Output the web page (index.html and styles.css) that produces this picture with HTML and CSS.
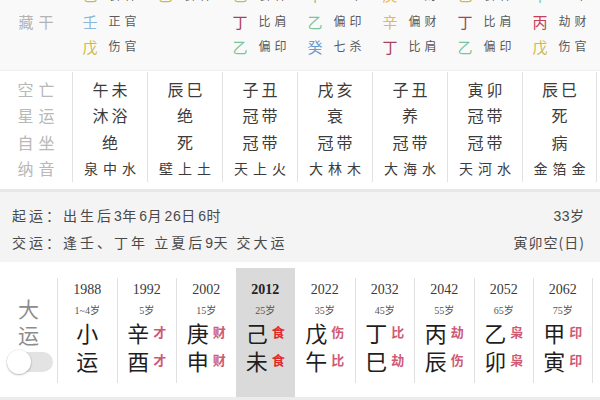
FILE: index.html
```html
<!DOCTYPE html>
<html lang="zh">
<head>
<meta charset="utf-8">
<link rel="stylesheet" href="styles.css">
</head>
<body>
<div class="page">
  <section class="cg">
    <div class="cg-row cut">
      <div class="cg-label"></div>
      <div class="cg-cell"><span class="st c-tu">己</span><span class="gd">食神</span></div>
      <div class="cg-cell"><span class="st c-tu">己</span><span class="gd">食神</span></div>
      <div class="cg-cell"><span class="st c-tu">己</span><span class="gd">食神</span></div>
      <div class="cg-cell"><span class="st c-mu">甲</span><span class="gd">正印</span></div>
      <div class="cg-cell"><span class="st c-jin">庚</span><span class="gd">正财</span></div>
      <div class="cg-cell"><span class="st c-tu">己</span><span class="gd">食神</span></div>
      <div class="cg-cell"><span class="st c-mu">甲</span><span class="gd">正印</span></div>
    </div>
    <div class="cg-row">
      <div class="cg-label">藏干</div>
      <div class="cg-cell"><span class="st c-ren">壬</span><span class="gd">正官</span></div>
      <div class="cg-cell"></div>
      <div class="cg-cell"><span class="st c-huo">丁</span><span class="gd">比肩</span></div>
      <div class="cg-cell"><span class="st c-mu">乙</span><span class="gd">偏印</span></div>
      <div class="cg-cell"><span class="st c-jin">辛</span><span class="gd">偏财</span></div>
      <div class="cg-cell"><span class="st c-huo">丁</span><span class="gd">比肩</span></div>
      <div class="cg-cell"><span class="st c-bing">丙</span><span class="gd">劫财</span></div>
    </div>
    <div class="cg-row">
      <div class="cg-label"></div>
      <div class="cg-cell"><span class="st c-tu">戊</span><span class="gd">伤官</span></div>
      <div class="cg-cell"></div>
      <div class="cg-cell"><span class="st c-mu">乙</span><span class="gd">偏印</span></div>
      <div class="cg-cell"><span class="st c-gui">癸</span><span class="gd">七杀</span></div>
      <div class="cg-cell"><span class="st c-huo">丁</span><span class="gd">比肩</span></div>
      <div class="cg-cell"><span class="st c-mu">乙</span><span class="gd">偏印</span></div>
      <div class="cg-cell"><span class="st c-tu">戊</span><span class="gd">伤官</span></div>
    </div>
  </section>

  <section class="tbl">
    <div class="tcol tlabel">
      <div class="tl">空亡</div><div class="tl">星运</div><div class="tl">自坐</div><div class="tl">纳音</div>
    </div>
    <div class="tcol">
      <div class="tl">午未</div><div class="tl">沐浴</div><div class="tl">绝</div><div class="tl ny">泉中水</div>
    </div>
    <div class="tcol">
      <div class="tl">辰巳</div><div class="tl">绝</div><div class="tl">死</div><div class="tl ny">壁上土</div>
    </div>
    <div class="tcol">
      <div class="tl">子丑</div><div class="tl">冠带</div><div class="tl">冠带</div><div class="tl ny">天上火</div>
    </div>
    <div class="tcol">
      <div class="tl">戌亥</div><div class="tl">衰</div><div class="tl">冠带</div><div class="tl ny">大林木</div>
    </div>
    <div class="tcol">
      <div class="tl">子丑</div><div class="tl">养</div><div class="tl">冠带</div><div class="tl ny">大海水</div>
    </div>
    <div class="tcol">
      <div class="tl">寅卯</div><div class="tl">冠带</div><div class="tl">冠带</div><div class="tl ny">天河水</div>
    </div>
    <div class="tcol">
      <div class="tl">辰巳</div><div class="tl">死</div><div class="tl">病</div><div class="tl ny">金箔金</div>
    </div>
  </section>

  <section class="info">
    <div class="info-row">
      <div class="info-l">起运：出生后<span class="num">3</span>年<span class="num">6</span>月<span class="num">26</span>日<span class="num">6</span>时</div>
      <div class="info-r"><span class="num">33</span>岁</div>
    </div>
    <div class="info-row">
      <div class="info-l">交运：逢壬、丁年 立夏后<span class="num">9</span>天 交大运</div>
      <div class="info-r">寅卯空(日)</div>
    </div>
  </section>

  <section class="dy">
    <div class="dy-label">
      <div class="dy-title">大</div>
      <div class="dy-title">运</div>
      <div class="toggle"><span class="knob"></span></div>
    </div>
    <div class="dcol">
      <div class="dinner">
        <div class="yr">1988</div>
        <div class="age">1~4岁</div>
        <div class="gz"><span class="zi">小</span></div>
        <div class="gz"><span class="zi">运</span></div>
      </div>
    </div>
    <div class="dcol">
      <div class="dinner">
        <div class="yr">1992</div>
        <div class="age">5岁</div>
        <div class="gz"><span class="zi">辛</span><span class="tag">才</span></div>
        <div class="gz"><span class="zi">酉</span><span class="tag">才</span></div>
      </div>
    </div>
    <div class="dcol">
      <div class="dinner">
        <div class="yr">2002</div>
        <div class="age">15岁</div>
        <div class="gz"><span class="zi">庚</span><span class="tag">财</span></div>
        <div class="gz"><span class="zi">申</span><span class="tag">财</span></div>
      </div>
    </div>
    <div class="dcol cur">
      <div class="dinner">
        <div class="yr">2012</div>
        <div class="age">25岁</div>
        <div class="gz"><span class="zi">己</span><span class="tag hot">食</span></div>
        <div class="gz"><span class="zi">未</span><span class="tag hot">食</span></div>
      </div>
    </div>
    <div class="dcol after">
      <div class="dinner">
        <div class="yr">2022</div>
        <div class="age">35岁</div>
        <div class="gz"><span class="zi">戊</span><span class="tag">伤</span></div>
        <div class="gz"><span class="zi">午</span><span class="tag">比</span></div>
      </div>
    </div>
    <div class="dcol">
      <div class="dinner">
        <div class="yr">2032</div>
        <div class="age">45岁</div>
        <div class="gz"><span class="zi">丁</span><span class="tag">比</span></div>
        <div class="gz"><span class="zi">巳</span><span class="tag">劫</span></div>
      </div>
    </div>
    <div class="dcol">
      <div class="dinner">
        <div class="yr">2042</div>
        <div class="age">55岁</div>
        <div class="gz"><span class="zi">丙</span><span class="tag">劫</span></div>
        <div class="gz"><span class="zi">辰</span><span class="tag">伤</span></div>
      </div>
    </div>
    <div class="dcol">
      <div class="dinner">
        <div class="yr">2052</div>
        <div class="age">65岁</div>
        <div class="gz"><span class="zi">乙</span><span class="tag">枭</span></div>
        <div class="gz"><span class="zi">卯</span><span class="tag">枭</span></div>
      </div>
    </div>
    <div class="dcol last">
      <div class="dinner">
        <div class="yr">2062</div>
        <div class="age">75岁</div>
        <div class="gz"><span class="zi">甲</span><span class="tag">印</span></div>
        <div class="gz"><span class="zi">寅</span><span class="tag">印</span></div>
      </div>
    </div>
  </section>
  <div class="band"></div>
</div>
</body>
</html>
```
FILE: styles.css
```css
* { box-sizing: border-box; }
html, body { margin: 0; padding: 0; }
body {
  width: 600px;
  height: 400px;
  overflow: hidden;
  background: #fff;
  font-family: "Noto Sans CJK SC", "Noto Sans", sans-serif;
  color: #333;
}
.page { width: 600px; }

/* 藏干 */
.cg {
  background: #f9f9f9;
  margin-top: -19.5px;
  padding-bottom: 11px;
  border-bottom: 1px solid #f0f0f0;
}
.cg-row {
  display: grid;
  grid-template-columns: 72px repeat(7, 75px);
  height: 25px;
}
.cg-row.cut { height: 28px; }
.cg-label {
  display: flex;
  align-items: center;
  justify-content: center;
  font-size: 15px;
  letter-spacing: 5px;
  color: #b4b4b4;
  padding-left: 5px;
}
.cg-cell {
  display: flex;
  align-items: center;
  justify-content: center;
  gap: 11px;
}
.st { font-size: 15px; line-height: 1; }
.gd { font-size: 12px; letter-spacing: 4px; color: #5a5a5a; margin-right: -4px; line-height: 1; }
.c-ren { color: #8ab7da; }
.c-gui { color: #6b9bd0; }
.c-tu { color: #cdb94a; }
.c-huo { color: #a8415c; }
.c-bing { color: #c7405a; }
.c-mu { color: #7cc49a; }
.c-jin { color: #ebb646; }

/* 空亡 table */
.tbl {
  display: flex;
  background: #fff;
  padding-top: 1px;
  padding-bottom: 7px;
}
.tcol {
  width: 75px;
  border-left: 1px solid #e2e2e2;
  padding: 4px 0 0;
  height: 110px;
  display: flex;
  flex-direction: column;
}
.tcol.tlabel { width: 72px; border-left: none; }
.tcol:last-child { border-right: 1px solid #e2e2e2; }
.tl {
  height: 26.5px;
  line-height: 26.5px;
  text-align: center;
  font-size: 16px;
  letter-spacing: 3px;
  padding-left: 3px;
  color: #3c3c3c;
}
.tlabel .tl { color: #b8b8b8; letter-spacing: 5px; padding-left: 5px; }
.tl.ny { font-size: 14px; letter-spacing: 5px; padding-left: 5px; }

/* info */
.info {
  background: #f4f4f4;
  border-top: 3px solid #e8e8e8;
  padding: 10px 15px 6px 12px;
  height: 73px;
}
.info-row {
  display: flex;
  justify-content: space-between;
  height: 27px;
  line-height: 27px;
  font-size: 14px;
  color: #4a4a4a;
}
.info-l { letter-spacing: 3px; }
.info-r { letter-spacing: 1px; }
.num {
  font-family: "Liberation Sans Narrow", "Liberation Sans", sans-serif;
  letter-spacing: 0.5px;
  font-size: 14px;
}

/* 大运 */
.dy {
  display: grid;
  grid-template-columns: 57px repeat(9, 59.5px);
  background: #fff;
  padding-top: 6px;
  height: 135px;
}
.dy-label {
  display: flex;
  flex-direction: column;
  align-items: center;
  padding-top: 27px;
}
.dy-title {
  font-size: 21px;
  line-height: 26px;
  height: 26px;
  overflow: visible;
  color: #8c8c8c;
}
.toggle {
  margin-top: 5px;
  margin-left: 4px;
  width: 45px;
  height: 20px;
  border-radius: 10px;
  background: #e3e3e3;
  position: relative;
}
.knob {
  position: absolute;
  left: -1px;
  top: -2px;
  width: 24px;
  height: 24px;
  border-radius: 50%;
  background: #fff;
  box-shadow: 0 1px 2px rgba(0,0,0,0.25), 0 0 0 1px rgba(0,0,0,0.04);
}
.dcol { padding-top: 10px; }
.dcol.cur { background: #dadada; }
.dinner {
  border-left: 1px solid #e0e0e0;
  height: 105px;
  padding-top: 3px;
  display: flex;
  flex-direction: column;
  align-items: center;
}
.dcol.cur .dinner, .dcol.after .dinner { border-left: none; }
.dcol.last .dinner { border-right: 1px solid #e0e0e0; }
.yr {
  font-family: "Liberation Serif", serif;
  font-size: 14px;
  line-height: 18px;
  color: #3a3a3a;
}
.cur .yr { font-weight: bold; color: #222; }
.age {
  margin-top: 5px;
  font-family: "Liberation Serif", "Noto Sans CJK SC", serif;
  font-size: 10px;
  line-height: 14px;
  color: #555;
}
.gz {
  height: 28px;
  display: flex;
  align-items: center;
  justify-content: center;
  gap: 4px;
}
.zi { display: block; font-size: 22px; line-height: 22px; height: 22px; color: #1e1e1e; }
.tag { display: block; font-size: 13px; line-height: 14px; height: 14px; color: #cf5a74; font-weight: bold; }
.tag.hot { color: #e52a2a; }
.band { height: 3px; background: #ececec; }
```
